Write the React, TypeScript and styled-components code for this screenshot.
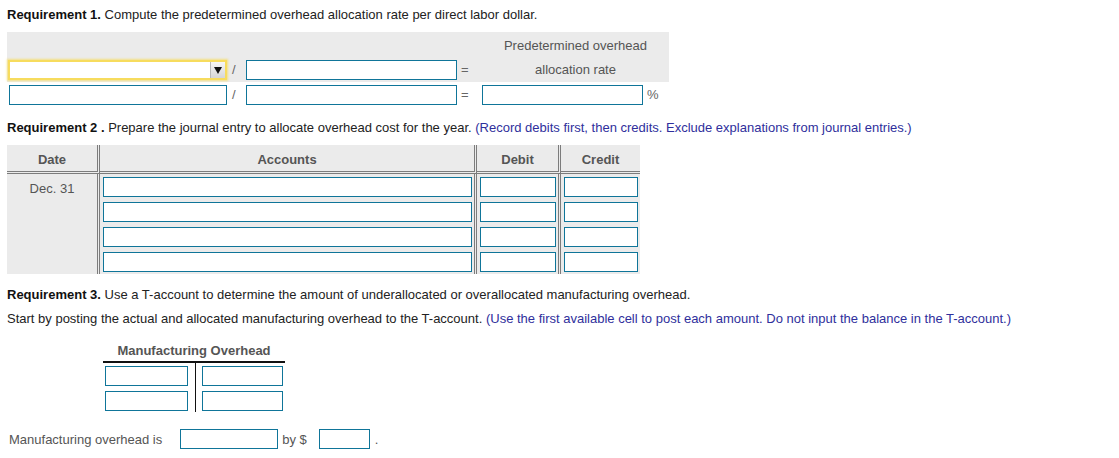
import React from "react";
import styled, { createGlobalStyle } from "styled-components";

const GlobalStyle = createGlobalStyle`
  html, body {
    margin: 0;
    padding: 0;
    background: #ffffff;
  }
  body {
    font-family: "Liberation Sans", Arial, sans-serif;
    font-size: 13px;
    color: #222222;
  }
  * { box-sizing: border-box; }
`;

const Page = styled.div`
  padding: 8px 7px 0 7px;
  width: 1119px;
`;

const Prompt = styled.p<{ $top?: number }>`
  margin: ${(p) => p.$top ?? 0}px 0 0 0;
  line-height: 14px;
  white-space: nowrap;
`;

const Strong = styled.b`
  font-weight: bold;
  color: #111;
`;

const Note = styled.span`
  color: #2f2f9c;
`;

const Field = styled.input<{ $w?: number }>`
  display: block;
  height: 20px;
  width: ${(p) => (p.$w ? `${p.$w}px` : "100%")};
  margin: 0;
  padding: 0 3px;
  border: 1px solid #0f7599;
  border-radius: 0;
  background: #ffffff;
  font: inherit;
  outline: none;
`;

/* ---------- Requirement 1 ---------- */

const RateBlock = styled.div`
  margin-top: 10px;
  width: 662px;
`;

const RateGrid = styled.div<{ $shaded?: boolean; $rows: string }>`
  display: grid;
  grid-template-columns: 221px 18px 211px 25px 187px;
  grid-template-rows: ${(p) => p.$rows};
  align-items: center;
  background: ${(p) => (p.$shaded ? "#ebebeb" : "transparent")};
`;

const Op = styled.span`
  color: #666;
  padding-left: 4px;
  line-height: 14px;
`;

const ResultLabel = styled.div<{ $col?: number }>`
  grid-column: 5;
  text-align: center;
  color: #555;
  line-height: 14px;
  align-self: ${(p) => (p.$col === 1 ? "end" : "center")};
  padding-bottom: ${(p) => (p.$col === 1 ? "5px" : "0")};
`;

const SelectBox = styled.div`
  position: relative;
  margin-left: 1px;
  width: 219px;
  height: 20px;
  border: 2px solid #f7dc5e;
  box-shadow: 0 0 2px 1px rgba(247, 220, 94, 0.75);
  background: #ffffff;
`;

const SelectButton = styled.div`
  position: absolute;
  right: 0;
  top: 0;
  width: 15px;
  height: 16px;
  border-left: 1px solid #b8b8b8;
  background: linear-gradient(#f6f6f6, #d6d6d6);
  display: flex;
  align-items: center;
  justify-content: center;
`;

const Caret = styled.span`
  width: 0;
  height: 0;
  border-left: 4px solid transparent;
  border-right: 4px solid transparent;
  border-top: 7px solid #111;
`;

const Indented = styled.div<{ $left: number; $w?: number }>`
  margin-left: ${(p) => p.$left}px;
  width: ${(p) => (p.$w ? `${p.$w}px` : "auto")};
`;

const ResultCell = styled.div`
  display: flex;
  align-items: center;
`;

const Percent = styled.span`
  color: #666;
  margin-left: 4px;
`;

/* ---------- Requirement 2 ---------- */

const Journal = styled.div`
  margin-top: 10px;
  width: 633px;
  display: grid;
  grid-template-columns: 93px 377px 84px 79px;
  grid-template-rows: 29px repeat(4, 25px);
  background: #ebebeb;
`;

const HeadCell = styled.div<{ $last?: boolean }>`
  border-bottom: 3px double #7c7c7c;
  border-right: ${(p) => (p.$last ? "none" : "3px double #7c7c7c")};
  font-weight: bold;
  color: #555;
  text-align: center;
  line-height: 14px;
  padding-top: 8px;
`;

const DateCell = styled.div`
  grid-row: span 4;
  border-right: 3px double #7c7c7c;
  color: #555;
  text-align: center;
  padding-top: 8px;
  line-height: 14px;
`;

const EntryCell = styled.div<{ $last?: boolean }>`
  border-right: ${(p) => (p.$last ? "none" : "3px double #7c7c7c")};
  padding: 3px 2px 0 3px;
`;

/* ---------- Requirement 3 ---------- */

const TAccount = styled.div`
  margin-top: 18px;
  margin-left: 96px;
  width: 182px;
`;

const TTitle = styled.div`
  text-align: center;
  font-weight: bold;
  color: #555;
  line-height: 14px;
  padding-bottom: 3px;
  border-bottom: 2px solid #111;
`;

const TBody = styled.div`
  display: flex;
`;

const TSide = styled.div<{ $left?: boolean }>`
  display: flex;
  flex-direction: column;
  gap: 5px;
  padding: ${(p) => (p.$left ? "3px 7px 1px 2px" : "3px 2px 1px 6px")};
  width: ${(p) => (p.$left ? "93px" : "89px")};
  border-right: ${(p) => (p.$left ? "1px solid #111" : "none")};
`;

const Conclusion = styled.div`
  margin-top: 17px;
  display: flex;
  align-items: center;
  height: 20px;
  color: #555;
`;

const ConclusionText = styled.span<{ $left: number }>`
  margin-left: ${(p) => p.$left}px;
  white-space: nowrap;
`;

const Spacer = styled.div<{ $left: number }>`
  margin-left: ${(p) => p.$left}px;
`;

export default function App() {
  const rows = [0, 1, 2, 3];
  return (
    <>
      <GlobalStyle />
      <Page>
        <Prompt>
          <Strong>Requirement 1.</Strong> Compute the predetermined overhead allocation rate per direct labor dollar.
        </Prompt>

        <RateBlock>
          <RateGrid $shaded $rows="26px 24px">
            <ResultLabel $col={1}>Predetermined overhead</ResultLabel>
            <SelectBox>
              <SelectButton>
                <Caret />
              </SelectButton>
            </SelectBox>
            <Op>/</Op>
            <Field />
            <Op>=</Op>
            <ResultLabel>allocation rate</ResultLabel>
          </RateGrid>
          <RateGrid $rows="25px">
            <Indented $left={2} $w={218}>
              <Field />
            </Indented>
            <Op>/</Op>
            <Field />
            <Op>=</Op>
            <ResultCell>
              <Field $w={161} />
              <Percent>%</Percent>
            </ResultCell>
          </RateGrid>
        </RateBlock>

        <Prompt $top={14}>
          <Strong>Requirement 2 .</Strong> Prepare the journal entry to allocate overhead cost for the year.{" "}
          <Note>(Record debits first, then credits. Exclude explanations from journal entries.)</Note>
        </Prompt>

        <Journal>
          <HeadCell>Date</HeadCell>
          <HeadCell>Accounts</HeadCell>
          <HeadCell>Debit</HeadCell>
          <HeadCell $last>Credit</HeadCell>
          <DateCell>Dec. 31</DateCell>
          {rows.map((r) => (
            <React.Fragment key={r}>
              <EntryCell>
                <Field />
              </EntryCell>
              <EntryCell>
                <Field />
              </EntryCell>
              <EntryCell $last>
                <Field />
              </EntryCell>
            </React.Fragment>
          ))}
        </Journal>

        <Prompt $top={14}>
          <Strong>Requirement 3.</Strong> Use a T-account to determine the amount of underallocated or overallocated manufacturing overhead.
        </Prompt>
        <Prompt $top={10}>
          Start by posting the actual and allocated manufacturing overhead to the T-account.{" "}
          <Note>(Use the first available cell to post each amount. Do not input the balance in the T-account.)</Note>
        </Prompt>

        <TAccount>
          <TTitle>Manufacturing Overhead</TTitle>
          <TBody>
            <TSide $left>
              <Field />
              <Field />
            </TSide>
            <TSide>
              <Field />
              <Field />
            </TSide>
          </TBody>
        </TAccount>

        <Conclusion>
          <ConclusionText $left={2}>Manufacturing overhead is</ConclusionText>
          <Spacer $left={18}>
            <Field $w={98} />
          </Spacer>
          <ConclusionText $left={4}>by $</ConclusionText>
          <Spacer $left={12}>
            <Field $w={51} />
          </Spacer>
          <ConclusionText $left={5}>.</ConclusionText>
        </Conclusion>
      </Page>
    </>
  );
}
